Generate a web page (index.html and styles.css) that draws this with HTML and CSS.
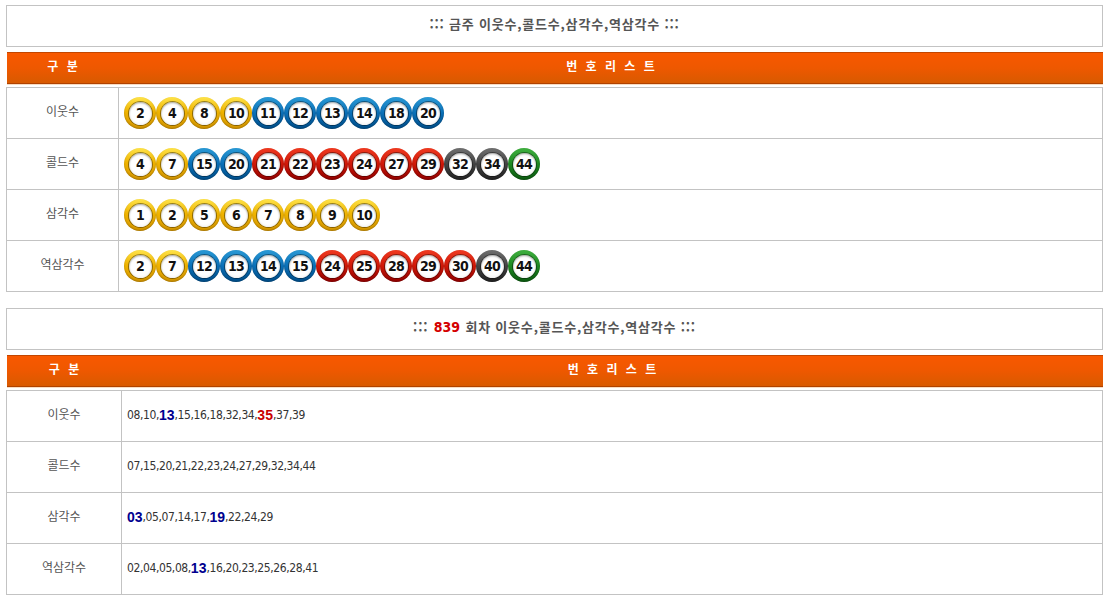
FILE: index.html
```html
<!DOCTYPE html>
<html lang="ko">
<head>
<meta charset="utf-8">
<title>이웃수 콜드수 삼각수 역삼각수</title>
<link rel="stylesheet" href="styles.css">
</head>
<body>
<section class="block">
  <div class="title">::: 금주 이웃수,콜드수,삼각수,역삼각수 :::</div>
  <div class="head"><div class="hc">구 분</div><div class="hl">번 호 리 스 트</div></div>
  <div class="list">
    <div class="lab">이웃수</div>
    <div class="balls">
      <span class="ball y"><i>2</i></span><span class="ball y"><i>4</i></span><span class="ball y"><i>8</i></span><span class="ball y"><i>10</i></span><span class="ball b"><i>11</i></span><span class="ball b"><i>12</i></span><span class="ball b"><i>13</i></span><span class="ball b"><i>14</i></span><span class="ball b"><i>18</i></span><span class="ball b"><i>20</i></span>
    </div>
    <div class="lab">콜드수</div>
    <div class="balls">
      <span class="ball y"><i>4</i></span><span class="ball y"><i>7</i></span><span class="ball b"><i>15</i></span><span class="ball b"><i>20</i></span><span class="ball r"><i>21</i></span><span class="ball r"><i>22</i></span><span class="ball r"><i>23</i></span><span class="ball r"><i>24</i></span><span class="ball r"><i>27</i></span><span class="ball r"><i>29</i></span><span class="ball k"><i>32</i></span><span class="ball k"><i>34</i></span><span class="ball g"><i>44</i></span>
    </div>
    <div class="lab">삼각수</div>
    <div class="balls">
      <span class="ball y"><i>1</i></span><span class="ball y"><i>2</i></span><span class="ball y"><i>5</i></span><span class="ball y"><i>6</i></span><span class="ball y"><i>7</i></span><span class="ball y"><i>8</i></span><span class="ball y"><i>9</i></span><span class="ball y"><i>10</i></span>
    </div>
    <div class="lab">역삼각수</div>
    <div class="balls">
      <span class="ball y"><i>2</i></span><span class="ball y"><i>7</i></span><span class="ball b"><i>12</i></span><span class="ball b"><i>13</i></span><span class="ball b"><i>14</i></span><span class="ball b"><i>15</i></span><span class="ball r"><i>24</i></span><span class="ball r"><i>25</i></span><span class="ball r"><i>28</i></span><span class="ball r"><i>29</i></span><span class="ball r"><i>30</i></span><span class="ball k"><i>40</i></span><span class="ball g"><i>44</i></span>
    </div>
  </div>
</section>

<section class="block second">
  <div class="title">::: <b class="red">839</b> 회차 이웃수,콜드수,삼각수,역삼각수 :::</div>
  <div class="head wide"><div class="hc">구 분</div><div class="hl">번 호 리 스 트</div></div>
  <div class="list wide">
    <div class="lab">이웃수</div>
    <div class="nums">08,10,<b class="hb">13</b>,15,16,18,32,34,<b class="hr">35</b>,37,39</div>
    <div class="lab">콜드수</div>
    <div class="nums">07,15,20,21,22,23,24,27,29,32,34,44</div>
    <div class="lab">삼각수</div>
    <div class="nums"><b class="hb">03</b>,05,07,14,17,<b class="hb">19</b>,22,24,29</div>
    <div class="lab">역삼각수</div>
    <div class="nums">02,04,05,08,<b class="hb">13</b>,16,20,23,25,26,28,41</div>
  </div>
</section>
</body>
</html>
```

FILE: styles.css
```css
* { box-sizing: border-box; }
body {
  margin: 0;
  padding: 5px 4px 0 6px;
  background: #fff;
  font-family: "Noto Sans CJK KR", "Noto Sans", sans-serif;
  font-size: 12px;
  color: #333;
}
.block { display: flex; flex-direction: column; }
.second { margin-top: 16px; }
.title {
  height: 42px;
  border: 1px solid #c3c3c3;
  display: flex;
  align-items: center;
  justify-content: center;
  padding-bottom: 5px;
  font-weight: bold;
  font-size: 13px;
  letter-spacing: 0.8px;
  color: #555;
  white-space: pre;
}
.title .red {
  color: #d40000;
  font-family: "Liberation Sans Narrow", "DejaVu Sans Condensed", sans-serif;
  font-size: 14px;
  letter-spacing: 0;
  margin: 0 1px;
}
.head {
  margin: 5px 0 3px 1px;
  height: 32px;
  display: grid;
  grid-template-columns: 111px 1fr;
  align-items: center;
  color: #fff;
  font-weight: bold;
  font-size: 12px;
  word-spacing: 5px;
  border-top: 1px solid #c24600;
  border-bottom: 1px solid #b04200;
  background: linear-gradient(#f85800, #ee5800 50%, #d85a00);
  box-shadow: 0 1px 0 #f8dcc2;
}
.head.wide { grid-template-columns: 114px 1fr; }
.hc, .hl { text-align: center; padding-bottom: 5px; }
.list {
  display: grid;
  grid-template-columns: 112px 1fr;
  border-top: 1px solid #c3c3c3;
  border-left: 1px solid #c3c3c3;
}
.list.wide { grid-template-columns: 115px 1fr; }
.lab, .balls, .nums {
  height: 51px;
  border-right: 1px solid #c3c3c3;
  border-bottom: 1px solid #c3c3c3;
  display: flex;
  align-items: center;
}
.lab { justify-content: center; color: #555; padding-bottom: 5px; }
.balls { padding-left: 5px; }
.nums { padding-left: 5px; padding-bottom: 3px; color: #333; letter-spacing: -0.4px; font-family: "DejaVu Sans Condensed", "Liberation Sans", sans-serif; }
.nums b { font-family: "Liberation Sans", sans-serif; font-size: 14px; letter-spacing: 0; }
.hb { color: #00008f; }
.hr { color: #c80000; }
.ball {
  width: 32px;
  height: 32px;
  border-radius: 50%;
  display: flex;
  align-items: center;
  justify-content: center;
  flex: none;
  box-shadow: inset 0 -1px 2px rgba(0,0,0,0.25);
}
.ball i {
  font-style: normal;
  width: 23px;
  height: 23px;
  border-radius: 50%;
  background: radial-gradient(circle at 50% 45%, #fff 55%, #e6e6e6 100%);
  display: flex;
  align-items: center;
  justify-content: center;
  font-family: "DejaVu Sans Condensed", "Liberation Sans", sans-serif;
  font-weight: bold;
  font-size: 14px;
  letter-spacing: -0.8px;
  color: #111;
  box-shadow: 0 0 0 1px rgba(0,0,0,0.4), inset 0 1px 2px rgba(0,0,0,0.35);
}
.ball.y { background: linear-gradient(#ffe44a, #f0b400 45%, #d89800); }
.ball.b { background: linear-gradient(#2a9ad6, #0a70b8 50%, #00508e); }
.ball.r { background: linear-gradient(#f03a20, #d01808 50%, #980000); }
.ball.k { background: linear-gradient(#707070, #444 50%, #222); }
.ball.g { background: linear-gradient(#40b040, #1e8a22 50%, #0c5c10); }
```
